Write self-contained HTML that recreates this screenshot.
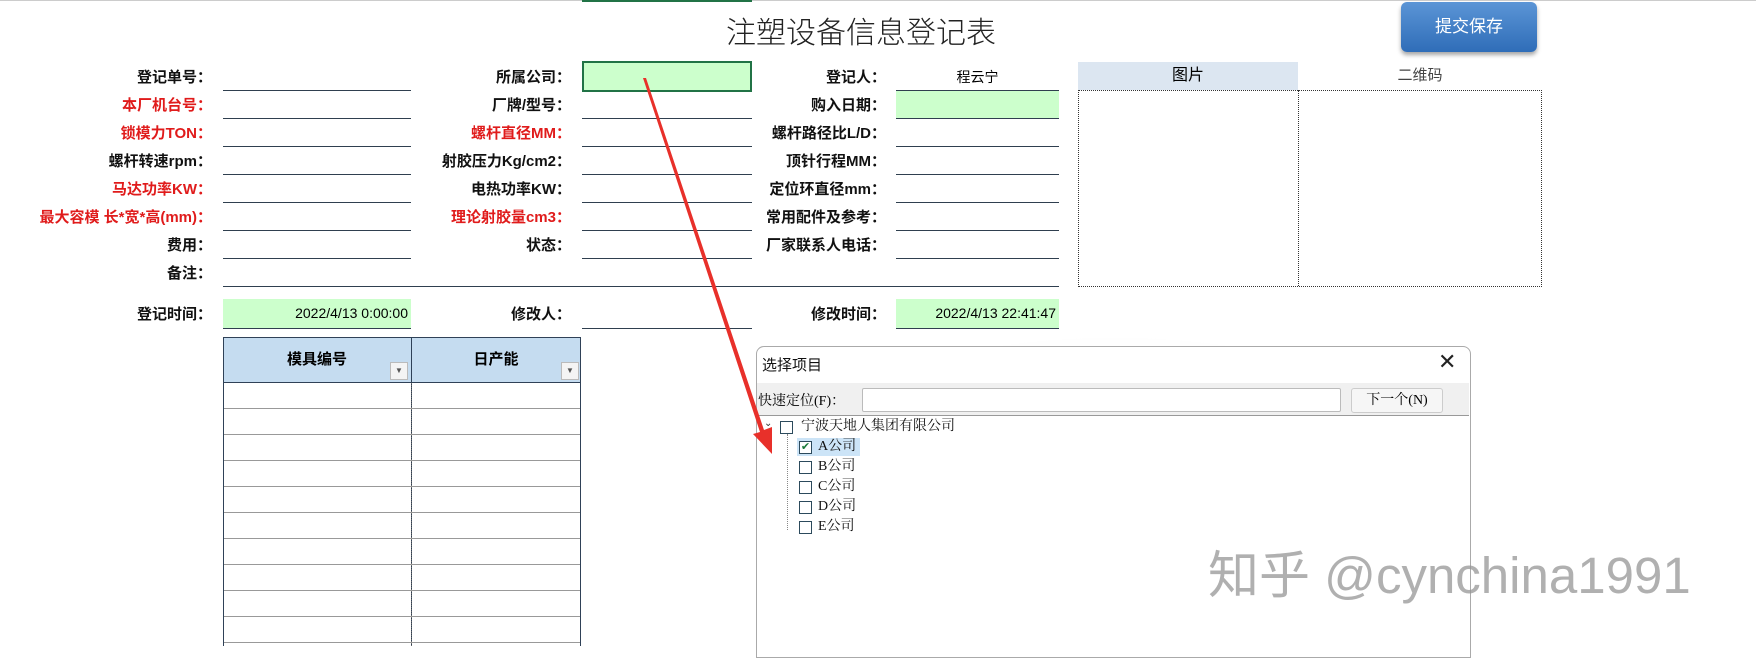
<!DOCTYPE html>
<html><head><meta charset="utf-8"><style>
body{margin:0;width:1756px;height:646px;background:#fff;position:relative;overflow:hidden;font-family:"Liberation Sans","Noto Sans CJK SC",sans-serif;}
.a{position:absolute;}
.l{position:absolute;text-align:right;font-size:15px;color:#111;height:20px;line-height:20px;font-weight:bold;}
.r{color:#e01b1b;}
.ln{position:absolute;height:1px;background:#2f3f4f;}
.tb{border-left:1px solid #2f4157;border-right:1px solid #2f4157;}
.dd{position:absolute;width:16px;height:16px;background:#f4f4f4;border:1px solid #bbb;font-size:8px;color:#555;text-align:center;line-height:16px;}
.cb{position:absolute;width:11px;height:11px;border:1px solid #2c4a5c;background:#fff;}
.tx{position:absolute;font-size:14px;font-family:"Liberation Serif","Noto Serif CJK SC",serif;color:#111;line-height:16px;}
</style></head><body>
<div class="a" style="left:0;top:0;width:1756px;height:1px;background:#ccc"></div>
<div class="a" style="left:582px;top:0;width:170px;height:2px;background:#217346"></div>
<div class="a" style="left:726px;top:12px;font-size:30px;color:#222;font-family:'Noto Sans CJK SC',sans-serif;font-weight:300;line-height:36px">注塑设备信息登记表</div>
<div class="a" style="left:1401px;top:2px;width:136px;height:50px;border-radius:6px;background:linear-gradient(#5b95d6,#2f6db8);box-shadow:0 3px 4px rgba(0,0,0,.35);color:#fff;font-size:17px;text-align:center;line-height:50px">提交保存</div>

<div class="l" style="left:0;width:212px;top:68px">登记单号：</div>
<div class="l r" style="left:0;width:212px;top:96px">本厂机台号：</div>
<div class="l r" style="left:0;width:212px;top:124px">锁模力TON：</div>
<div class="l" style="left:0;width:212px;top:152px">螺杆转速rpm：</div>
<div class="l r" style="left:0;width:212px;top:180px">马达功率KW：</div>
<div class="l r" style="left:0;width:212px;top:208px">最大容模 长*宽*高(mm)：</div>
<div class="l" style="left:0;width:212px;top:236px">费用：</div>
<div class="l" style="left:0;width:212px;top:264px">备注：</div>
<div class="l" style="left:0;width:212px;top:305px">登记时间：</div>
<div class="l" style="left:400px;width:171px;top:68px">所属公司：</div>
<div class="l" style="left:400px;width:171px;top:96px">厂牌/型号：</div>
<div class="l r" style="left:400px;width:171px;top:124px">螺杆直径MM：</div>
<div class="l" style="left:400px;width:171px;top:152px">射胶压力Kg/cm2：</div>
<div class="l" style="left:400px;width:171px;top:180px">电热功率KW：</div>
<div class="l r" style="left:400px;width:171px;top:208px">理论射胶量cm3：</div>
<div class="l" style="left:400px;width:171px;top:236px">状态：</div>
<div class="l" style="left:400px;width:171px;top:305px">修改人：</div>
<div class="l" style="left:700px;width:186px;top:68px">登记人：</div>
<div class="l" style="left:700px;width:186px;top:96px">购入日期：</div>
<div class="l" style="left:700px;width:186px;top:124px">螺杆路径比L/D：</div>
<div class="l" style="left:700px;width:186px;top:152px">顶针行程MM：</div>
<div class="l" style="left:700px;width:186px;top:180px">定位环直径mm：</div>
<div class="l" style="left:700px;width:186px;top:208px">常用配件及参考：</div>
<div class="l" style="left:700px;width:186px;top:236px">厂家联系人电话：</div>
<div class="l" style="left:700px;width:186px;top:305px">修改时间：</div>

<div class="a" style="left:896px;top:67px;width:163px;text-align:center;font-size:14px">程云宁</div>
<div class="a" style="left:896px;top:91px;width:163px;height:27px;background:#ccffcc"></div>
<div class="a" style="left:582px;top:61px;width:166px;height:27px;background:#ccffcc;border:2px solid #217346"></div>
<div class="a" style="left:223px;top:299px;width:188px;height:29px;background:#ccffcc;font-size:14px;text-align:right;line-height:29px;box-sizing:border-box;padding-right:3px">2022/4/13 0:00:00</div>
<div class="a" style="left:896px;top:299px;width:163px;height:29px;background:#ccffcc;font-size:14px;text-align:right;line-height:29px;box-sizing:border-box;padding-right:3px">2022/4/13 22:41:47</div>

<div class="ln" style="left:223px;width:188px;top:90px"></div><div class="ln" style="left:582px;width:170px;top:118px"></div><div class="ln" style="left:896px;width:163px;top:90px"></div>
<div class="ln" style="left:223px;width:188px;top:118px"></div><div class="ln" style="left:896px;width:163px;top:118px"></div>
<div class="ln" style="left:223px;width:188px;top:146px"></div><div class="ln" style="left:582px;width:170px;top:146px"></div><div class="ln" style="left:896px;width:163px;top:146px"></div>
<div class="ln" style="left:223px;width:188px;top:174px"></div><div class="ln" style="left:582px;width:170px;top:174px"></div><div class="ln" style="left:896px;width:163px;top:174px"></div>
<div class="ln" style="left:223px;width:188px;top:202px"></div><div class="ln" style="left:582px;width:170px;top:202px"></div><div class="ln" style="left:896px;width:163px;top:202px"></div>
<div class="ln" style="left:223px;width:188px;top:230px"></div><div class="ln" style="left:582px;width:170px;top:230px"></div><div class="ln" style="left:896px;width:163px;top:230px"></div>
<div class="ln" style="left:223px;width:188px;top:258px"></div><div class="ln" style="left:582px;width:170px;top:258px"></div><div class="ln" style="left:896px;width:163px;top:258px"></div>
<div class="ln" style="left:223px;width:836px;top:286px"></div>
<div class="ln" style="left:223px;width:188px;top:328px"></div><div class="ln" style="left:582px;width:170px;top:328px"></div><div class="ln" style="left:896px;width:163px;top:328px"></div>

<div class="a" style="left:1078px;top:62px;width:220px;height:28px;background:#dce6f1;text-align:center;font-size:16px;line-height:28px">图片</div>
<div class="a" style="left:1298px;top:62px;width:244px;height:28px;text-align:center;font-size:15px;line-height:28px;color:#444">二维码</div>
<div class="a" style="left:1078px;top:90px;width:462px;height:195px;border:1px dotted #333"></div>
<div class="a" style="left:1298px;top:90px;width:0;height:196px;border-left:1px dotted #333"></div>

<div class="a" style="left:223px;top:337px;width:358px;height:46px;background:#c5dcf0;border:1px solid #2f4157;box-sizing:border-box"></div>
<div class="a" style="left:411px;top:337px;width:1px;height:309px;background:#2f4157"></div>
<div class="a" style="left:223px;top:348px;width:188px;text-align:center;font-size:15px;font-weight:bold">模具编号</div>
<div class="a" style="left:411px;top:348px;width:170px;text-align:center;font-size:15px;font-weight:bold">日产能</div>
<div class="dd" style="left:390px;top:362px">▼</div><div class="dd" style="left:561px;top:362px">▼</div>
<div class="a tb" style="left:223px;top:383px;width:356px;height:263px;background:repeating-linear-gradient(to bottom,transparent 0,transparent 25px,#999 25px,#999 26px)"></div>
<div class="a" style="left:411px;top:383px;width:0;height:263px;border-left:1px dotted #666"></div>

<div class="a" style="left:744px;top:330px;width:740px;height:316px;background:radial-gradient(ellipse at center,rgba(0,0,0,.05),transparent 70%)"></div>
<div class="a" style="left:756px;top:346px;width:713px;height:310px;background:#fff;border:1px solid #aaa;border-radius:8px 8px 0 0"></div>
<div class="a" style="left:762px;top:354px;font-size:15px;color:#111">选择项目</div>
<div class="a" style="left:1438px;top:349px;font-size:22px;color:#222;font-weight:300">✕</div>
<div class="a" style="left:757px;top:383px;width:712px;height:32px;background:#f0f0f0;border-bottom:1px solid #999"></div>
<div class="a" style="left:758px;top:390px;font-size:14px;font-family:'Liberation Serif','Noto Serif CJK SC',serif">快速定位(F)：</div>
<div class="a" style="left:862px;top:388px;width:477px;height:22px;background:#fff;border:1px solid #bbb;border-radius:2px"></div>
<div class="a" style="left:1351px;top:388px;width:90px;height:23px;background:#f6f6f6;border:1px solid #ccc;border-radius:3px;font-size:14px;text-align:center;line-height:23px;font-family:'Liberation Serif','Noto Serif CJK SC',serif">下一个(N)</div>
<div class="a" style="left:764px;top:418px;font-size:10px;color:#333">⌄</div>
<div class="cb" style="left:780px;top:421px"></div>
<div class="tx" style="left:801px;top:419px">宁波天地人集团有限公司</div>
<div class="a" style="left:787px;top:434px;width:0;height:96px;border-left:1px dotted #888"></div>
<div class="a" style="left:797px;top:438px;width:63px;height:18px;background:#cce4f7"></div>
<div class="cb" style="left:799px;top:441px;color:#1a7a3a;font-size:11px;line-height:11px;text-align:center">✔</div>
<div class="tx" style="left:818px;top:439px">A公司</div>
<div class="cb" style="left:799px;top:461px"></div><div class="tx" style="left:818px;top:459px">B公司</div>
<div class="cb" style="left:799px;top:481px"></div><div class="tx" style="left:818px;top:479px">C公司</div>
<div class="cb" style="left:799px;top:501px"></div><div class="tx" style="left:818px;top:499px">D公司</div>
<div class="cb" style="left:799px;top:521px"></div><div class="tx" style="left:818px;top:519px">E公司</div>

<div class="a" style="left:1208px;top:534px;font-size:51px;letter-spacing:0;color:rgba(150,150,150,.75);white-space:nowrap;font-family:'Liberation Sans','Noto Sans CJK SC',sans-serif">知乎 @cynchina1991</div>

<svg class="a" style="left:0;top:0" width="1756" height="646">
<polygon points="643,78 646,78 764,430 772,427 772,454 753,434 760,432" fill="#e8302a"/>
</svg>
</body></html>
